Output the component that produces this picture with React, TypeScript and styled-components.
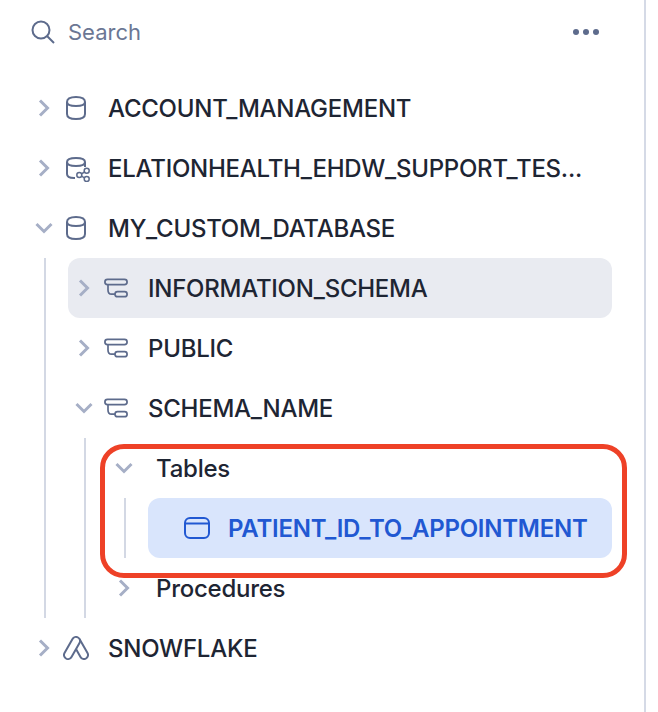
import React, { FunctionComponent, ReactNode } from 'react';
import styled, { createGlobalStyle } from 'styled-components';

const GlobalStyle = createGlobalStyle`
    html, body {
        margin: 0;
        padding: 0;
        background: #fff;
    }
`;

const StyledPanel = styled.div`
    position: relative;
    box-sizing: border-box;
    width: 646px;
    height: 712px;
    padding: 0 32px 0 28px;
    border-right: 2px solid #d5dae6;
    font-family: Inter, sans-serif;
`;

const StyledSearch = styled.div`
    display: flex;
    align-items: center;
    height: 64px;
    margin-bottom: 14px;
    padding-left: 3px;
    font-size: 22px;
    color: #6b7794;
`;

const StyledSearchLabel = styled.span`
    margin-left: 13px;
`;

const StyledDots = styled.div`
    display: flex;
    gap: 4px;
    margin-left: auto;
    margin-right: 13px;
`;

const StyledDot = styled.span`
    width: 6px;
    height: 6px;
    border-radius: 50%;
    background: #5d6b8c;
`;

const StyledRow = styled.div<{ $variant?: 'hover' | 'selected' }>`
    display: flex;
    align-items: center;
    height: 60px;
    border-radius: 12px;
    font-size: 24px;
    letter-spacing: -0.25px;
    white-space: nowrap;
    color: ${(p) => (p.$variant === 'selected' ? '#2158d2' : '#1e2533')};
    font-weight: ${(p) => (p.$variant === 'selected' ? 560 : 450)};
    background: ${(p) =>
        p.$variant === 'hover'
            ? '#e9ebf1'
            : p.$variant === 'selected'
              ? '#d9e5fc'
              : 'transparent'};
`;

const StyledCaret = styled.span`
    display: flex;
    justify-content: center;
    flex: none;
    width: 32px;
`;

const StyledIcon = styled.span`
    display: flex;
    justify-content: center;
    flex: none;
    width: 28px;
    margin: 0 18px 0 2px;
`;

const StyledSpacer = styled.span`
    flex: none;
    width: 36px;
`;

const StyledFolderLabel = styled.span`
    margin-left: 16px;
`;

const StyledTableLabel = styled.span`
    margin-left: 18px;
`;

const StyledGroup = styled.div`
    margin-left: 16px;
    padding-left: 22px;
    border-left: 2px solid #d3d8e4;
`;

const StyledHighlight = styled.div`
    position: absolute;
    left: 100px;
    top: 444px;
    box-sizing: border-box;
    width: 527px;
    height: 134px;
    border: 5px solid #ee4127;
    border-radius: 24px;
    pointer-events: none;
`;

const Caret: FunctionComponent<{ open?: boolean }> = ({ open }) => (
    <StyledCaret>
        <svg width='20' height='20' viewBox='0 0 20 20' fill='none'>
            <path
                d={open ? 'M2.5 6l7.5 7.5L17.5 6' : 'M6 2.5l7.5 7.5L6 17.5'}
                stroke='#a6afc6'
                strokeWidth='3'
            />
        </svg>
    </StyledCaret>
);

const iconStroke = '#5d6b8c';

const SearchIcon = () => (
    <svg width='24' height='24' viewBox='0 0 24 24' fill='none' stroke={iconStroke} strokeWidth='2'>
        <circle cx='10' cy='10' r='8.5' />
        <path d='M16 16l7 7' />
    </svg>
);

const DatabaseIcon = () => (
    <svg width='22' height='26' viewBox='0 0 22 26' fill='none' stroke={iconStroke} strokeWidth='2'>
        <path d='M2 7C2 4 5.500 2 11 2s9 2 9 5v12c0 3-3.500 5-9 5s-9-2-9-5z' />
        <path d='M2 7c0 2.500 3.500 4 9 4s9-1.500 9-4' />
    </svg>
);

const SharedDatabaseIcon = () => (
    <svg width='28' height='28' viewBox='0 0 28 28' fill='none' stroke={iconStroke} strokeWidth='2'>
        <path d='M5 8c0-2.500 3.500-4 9-4s9 1.500 9 4v5M5 8v12c0 2.500 2.500 4 7 4h1' />
        <path d='M5 8c0 2.500 3.500 4 9 4s9-1.500 9-4' />
        <g strokeWidth='1.500'>
            <circle cx='17.300' cy='21' r='2.500' />
            <circle cx='24.700' cy='16.700' r='2.500' />
            <circle cx='24.700' cy='25' r='2.500' />
            <path d='M19.500 19.800l3-1.800M19.500 22.200l3 1.600' />
        </g>
    </svg>
);

const SchemaIcon = () => (
    <svg width='26' height='22' viewBox='0 0 26 22' fill='none' stroke={iconStroke} strokeWidth='1.700'>
        <rect x='1.900' y='2.400' width='22.200' height='5.200' rx='2.600' />
        <rect x='12' y='14.700' width='12.100' height='5' rx='2.500' />
        <path d='M5 8v5c0 2.500 1.500 4.200 3.500 4.200H12' />
    </svg>
);

const TableIcon = () => (
    <svg width='26' height='22' viewBox='0 0 26 22' fill='none' stroke='#2158d2' strokeWidth='2'>
        <rect x='1' y='1' width='24' height='20' rx='5' />
        <path d='M1 6.500h24' />
    </svg>
);

const SnowflakeIcon = () => (
    <svg width='26' height='24' viewBox='0 0 26 24' fill='none' stroke={iconStroke} strokeWidth='2'>
        <path d='M9.500 3A4 4 0 0 1 16.500 7L8.500 21A4 4 0 0 1 1.500 17Z' />
        <path d='M16.500 3L24.500 17A4 4 0 0 1 17.500 21L13 13.100' />
    </svg>
);

interface ITreeRow {
    label: string;
    icon: ReactNode;
    open?: boolean;
    variant?: 'hover';
}

const TreeRow: FunctionComponent<ITreeRow> = ({ label, icon, open, variant }) => (
    <StyledRow $variant={variant}>
        <Caret open={open} />
        <StyledIcon>{icon}</StyledIcon>
        {label}
    </StyledRow>
);

const FolderRow: FunctionComponent<{ label: string; open?: boolean }> = ({ label, open }) => (
    <StyledRow>
        <Caret open={open} />
        <StyledFolderLabel>{label}</StyledFolderLabel>
    </StyledRow>
);

const App: FunctionComponent = () => (
    <StyledPanel>
        <GlobalStyle />
        <StyledSearch>
            <SearchIcon />
            <StyledSearchLabel>Search</StyledSearchLabel>
            <StyledDots>
                <StyledDot />
                <StyledDot />
                <StyledDot />
            </StyledDots>
        </StyledSearch>
        <TreeRow label='ACCOUNT_MANAGEMENT' icon={<DatabaseIcon />} />
        <TreeRow label='ELATIONHEALTH_EHDW_SUPPORT_TES...' icon={<SharedDatabaseIcon />} />
        <TreeRow label='MY_CUSTOM_DATABASE' icon={<DatabaseIcon />} open />
        <StyledGroup>
            <TreeRow label='INFORMATION_SCHEMA' icon={<SchemaIcon />} variant='hover' />
            <TreeRow label='PUBLIC' icon={<SchemaIcon />} />
            <TreeRow label='SCHEMA_NAME' icon={<SchemaIcon />} open />
            <StyledGroup>
                <FolderRow label='Tables' open />
                <StyledGroup>
                    <StyledRow $variant='selected'>
                        <StyledSpacer />
                        <TableIcon />
                        <StyledTableLabel>PATIENT_ID_TO_APPOINTMENT</StyledTableLabel>
                    </StyledRow>
                </StyledGroup>
                <FolderRow label='Procedures' />
            </StyledGroup>
        </StyledGroup>
        <TreeRow label='SNOWFLAKE' icon={<SnowflakeIcon />} />
        <StyledHighlight />
    </StyledPanel>
);

export default App;
